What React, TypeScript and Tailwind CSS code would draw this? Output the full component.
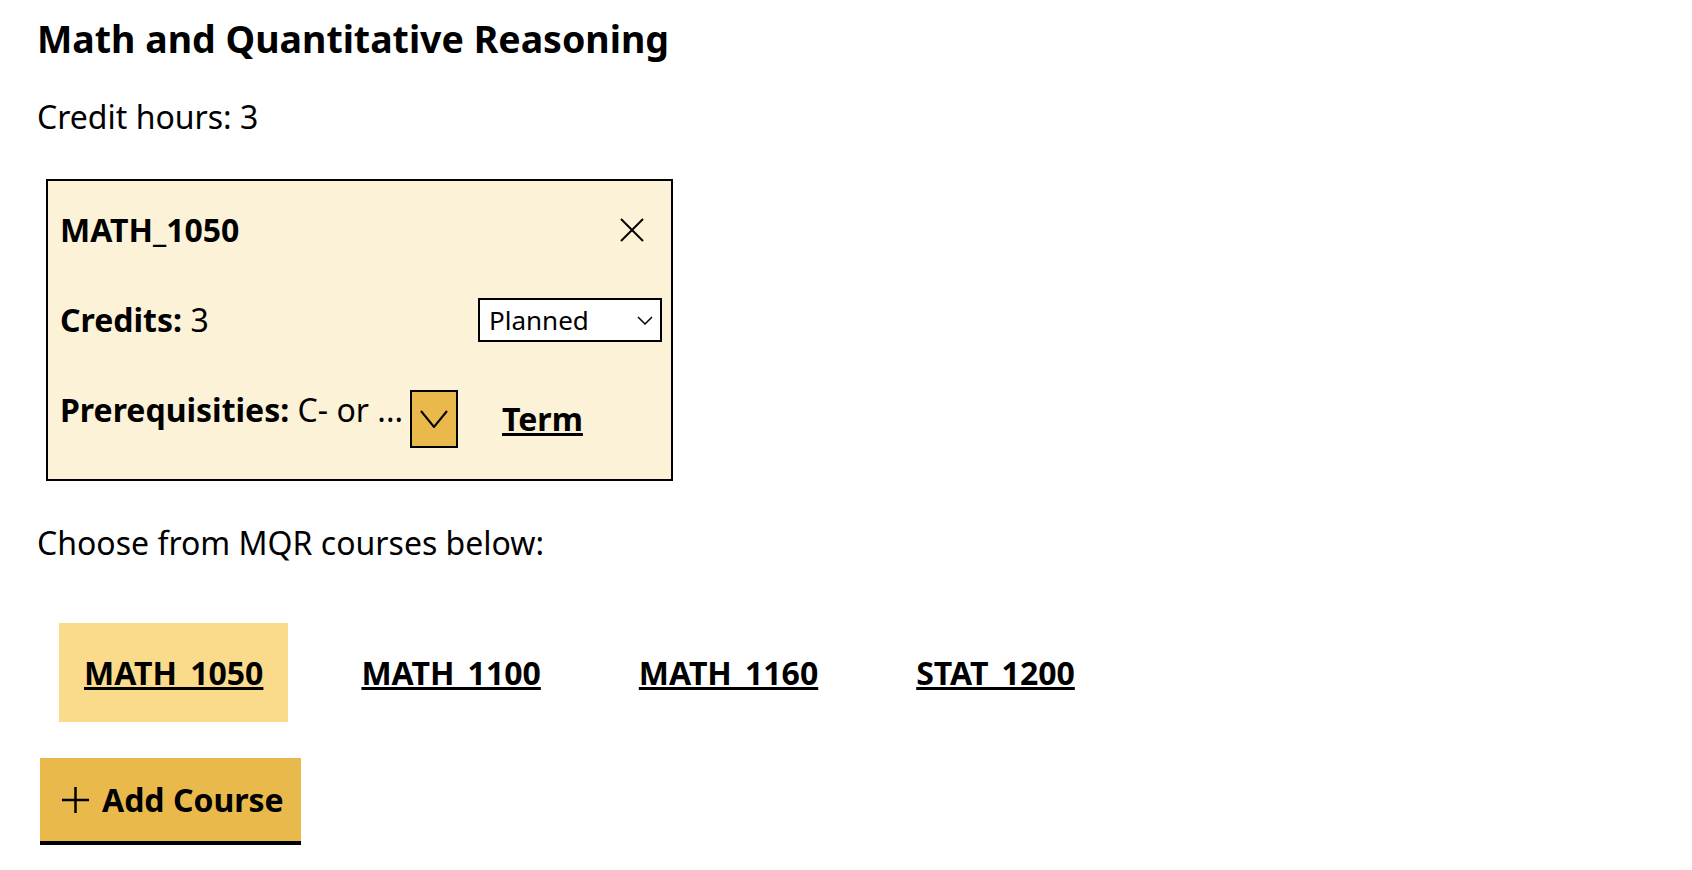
import React, { useState } from 'react';

const courses = ['MATH_1050', 'MATH_1100', 'MATH_1160', 'STAT_1200'];

const CloseIcon: React.FC = () => (
  <svg width="24" height="24" viewBox="0 0 24 24" fill="none" stroke="black" strokeWidth="2">
    <line x1="1" y1="1" x2="23" y2="23" />
    <line x1="23" y1="1" x2="1" y2="23" />
  </svg>
);

const App: React.FC = () => {
  const [status, setStatus] = useState('Planned');
  const [selected, setSelected] = useState('MATH_1050');

  return (
    <div className="min-h-screen bg-white pl-[37px] pt-[11px] text-black font-['Noto_Sans',sans-serif]">
      <h2 className="text-[37.5px] leading-[1.5] font-bold">Math and Quantitative Reasoning</h2>
      <p className="mt-[26px] text-[32px] leading-[1.5]">Credit hours: 3</p>

      {/* Course card */}
      <div className="mt-[38px] ml-[9px] w-[627px] border-2 border-black bg-[#fcf2d8] pl-3 pr-[9px] pt-[25px] pb-[31px] text-[32px] leading-[1.5]">
        <div className="flex items-center justify-between h-[48px]">
          <span className="font-bold">MATH_1050</span>
          <button className="w-[60px] flex justify-center">
            <CloseIcon />
          </button>
        </div>

        <div className="mt-[42px] flex items-center justify-between h-[48px]">
          <span>
            <b>Credits:</b> 3
          </span>
          <div className="relative">
            <select
              value={status}
              onChange={(e) => setStatus(e.target.value)}
              className="block appearance-none w-[184px] h-[44px] border-2 border-black bg-white pl-[9px] text-[26px] leading-none outline-none"
            >
              <option>Planned</option>
              <option>In Progress</option>
              <option>Completed</option>
            </select>
            <svg
              className="absolute right-[9px] top-[18px] pointer-events-none"
              width="16"
              height="9"
              viewBox="0 0 16 9"
              fill="none"
              stroke="black"
              strokeWidth="1.5"
            >
              <polyline points="1,1 8,8 15,1" />
            </svg>
          </div>
        </div>

        <div className="mt-[42px] flex items-start">
          <span>
            <b>Prerequisities:</b> C- or ...
          </span>
          <div className="ml-[7px] mt-[4px] flex items-center">
            <button className="w-[48px] h-[58px] border-2 border-black bg-[#e9b94c] flex items-center justify-center">
              <svg width="28" height="18" viewBox="0 0 28 18" fill="none" stroke="black" strokeWidth="2">
                <polyline points="1,1 14,17 27,1" />
              </svg>
            </button>
            <button className="ml-[44px] font-bold underline decoration-[3px] underline-offset-[2px]">
              Term
            </button>
          </div>
        </div>
      </div>

      <p className="mt-[38px] text-[32px] leading-[1.5]">Choose from MQR courses below:</p>

      <div className="mt-[56px] pl-[22px] flex gap-[48px]">
        {courses.map((c) => (
          <button
            key={c}
            onClick={() => setSelected(c)}
            className={`px-[25px] pt-[26px] pb-[25px] text-[32px] leading-[1.5] font-bold underline decoration-[3px] underline-offset-[2px] ${
              c === selected ? 'bg-[#fadb8b]' : ''
            }`}
          >
            {c}
          </button>
        ))}
      </div>

      <button className="mt-[36px] ml-[3px] flex items-center gap-[13px] h-[87px] bg-[#e9b94c] border-b-4 border-black pl-[22px] pr-[17px]">
        <svg width="27" height="26" viewBox="0 0 27 26" fill="none" stroke="black" strokeWidth="2.5">
          <line x1="13.5" y1="0" x2="13.5" y2="26" />
          <line x1="0" y1="13" x2="27" y2="13" />
        </svg>
        <span className="text-[32px] leading-[1.5] font-bold">Add Course</span>
      </button>
    </div>
  );
};

export default App;
